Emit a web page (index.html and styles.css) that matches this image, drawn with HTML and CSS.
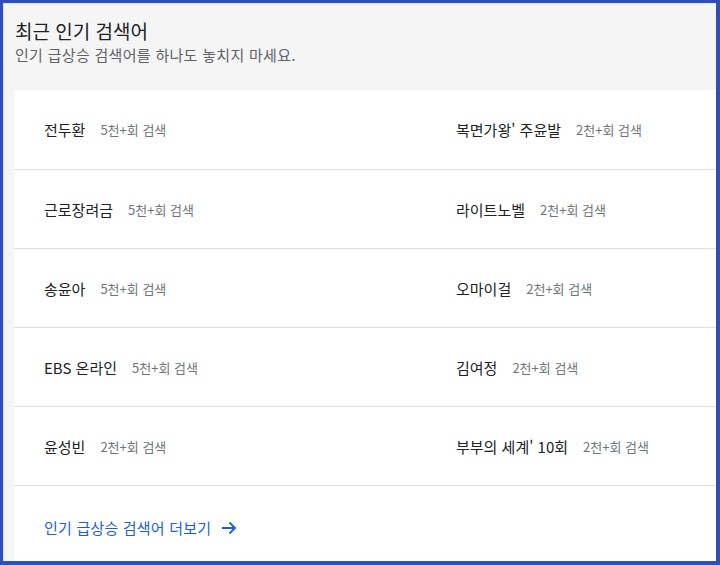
FILE: index.html
```html
<!DOCTYPE html>
<html lang="ko">

<head>
    <meta charset="UTF-8">
    <meta name="viewport" content="width=device-width, initial-scale=1.0">
    <title>최근 인기 검색어</title>
    <link rel="stylesheet" href="styles.css">
</head>

<body>
    <div class="frame">
        <div class="head">
            <h1>최근 인기 검색어</h1>
            <p>인기 급상승 검색어를 하나도 놓치지 마세요.</p>
        </div>
        <div class="card">
            <ul class="list">
                <li>
                    <div class="item"><span class="word">전두환</span><span class="count">5천+회 검색</span></div>
                    <div class="item"><span class="word">복면가왕' 주윤발</span><span class="count">2천+회 검색</span></div>
                </li>
                <li>
                    <div class="item"><span class="word">근로장려금</span><span class="count">5천+회 검색</span></div>
                    <div class="item"><span class="word">라이트노벨</span><span class="count">2천+회 검색</span></div>
                </li>
                <li>
                    <div class="item"><span class="word">송윤아</span><span class="count">5천+회 검색</span></div>
                    <div class="item"><span class="word">오마이걸</span><span class="count">2천+회 검색</span></div>
                </li>
                <li>
                    <div class="item"><span class="word">EBS 온라인</span><span class="count">5천+회 검색</span></div>
                    <div class="item"><span class="word">김여정</span><span class="count">2천+회 검색</span></div>
                </li>
                <li>
                    <div class="item"><span class="word">윤성빈</span><span class="count">2천+회 검색</span></div>
                    <div class="item"><span class="word">부부의 세계' 10회</span><span class="count">2천+회 검색</span></div>
                </li>
            </ul>
            <div class="more">
                <a href="#">인기 급상승 검색어 더보기
                    <svg width="16" height="16" viewBox="0 0 16 16"><path d="M1 8h13M8.5 2.5L14 8l-5.5 5.5" fill="none" stroke="#1a5fd8" stroke-width="1.8"/></svg>
                </a>
            </div>
        </div>
    </div>
</body>

</html>
```

FILE: styles.css
```css
* {
    margin: 0;
    padding: 0;
    list-style: none;
    box-sizing: border-box;
}

body {
    font-family: "Noto Sans CJK KR", "Noto Sans", sans-serif;
    color: #202124;
}

.frame {
    width: 720px;
    height: 565px;
    border: 3px solid #2e4fb9;
    border-right-width: 4px;
    border-bottom-width: 4px;
    background: #f5f5f5;
    display: flex;
    flex-direction: column;
    box-shadow: inset 1px 1px 0 #dfe6fb;
}

.head {
    padding: 14px 0 0 12px;
    height: 87px;
}

.head h1 {
    font-size: 19px;
    font-weight: normal;
    line-height: 28px;
    color: #202124;
}

.head p {
    font-size: 15px;
    line-height: 20px;
    letter-spacing: 0.3px;
    color: #5f6368;
}

.card {
    flex: 1;
    margin-left: 11px;
    background: #fff;
    display: flex;
    flex-direction: column;
}

.list li {
    display: flex;
    height: 79px;
    border-bottom: 1px solid #e0e0e0;
}

.list li:first-child {
    height: 80px;
}

.item {
    display: flex;
    align-items: center;
    padding-left: 30px;
}

.item:first-child {
    width: 412px;
}

.word {
    font-size: 15px;
    color: #202124;
}

.count {
    font-size: 13px;
    color: #70757a;
    margin-left: 15px;
}

.more {
    padding: 29px 0 0 30px;
}

.more a {
    display: inline-flex;
    align-items: center;
    font-size: 15px;
    line-height: 20px;
    letter-spacing: 0.2px;
    color: #1a5fd8;
    text-decoration: none;
}

.more svg {
    margin-left: 10px;
}
```
